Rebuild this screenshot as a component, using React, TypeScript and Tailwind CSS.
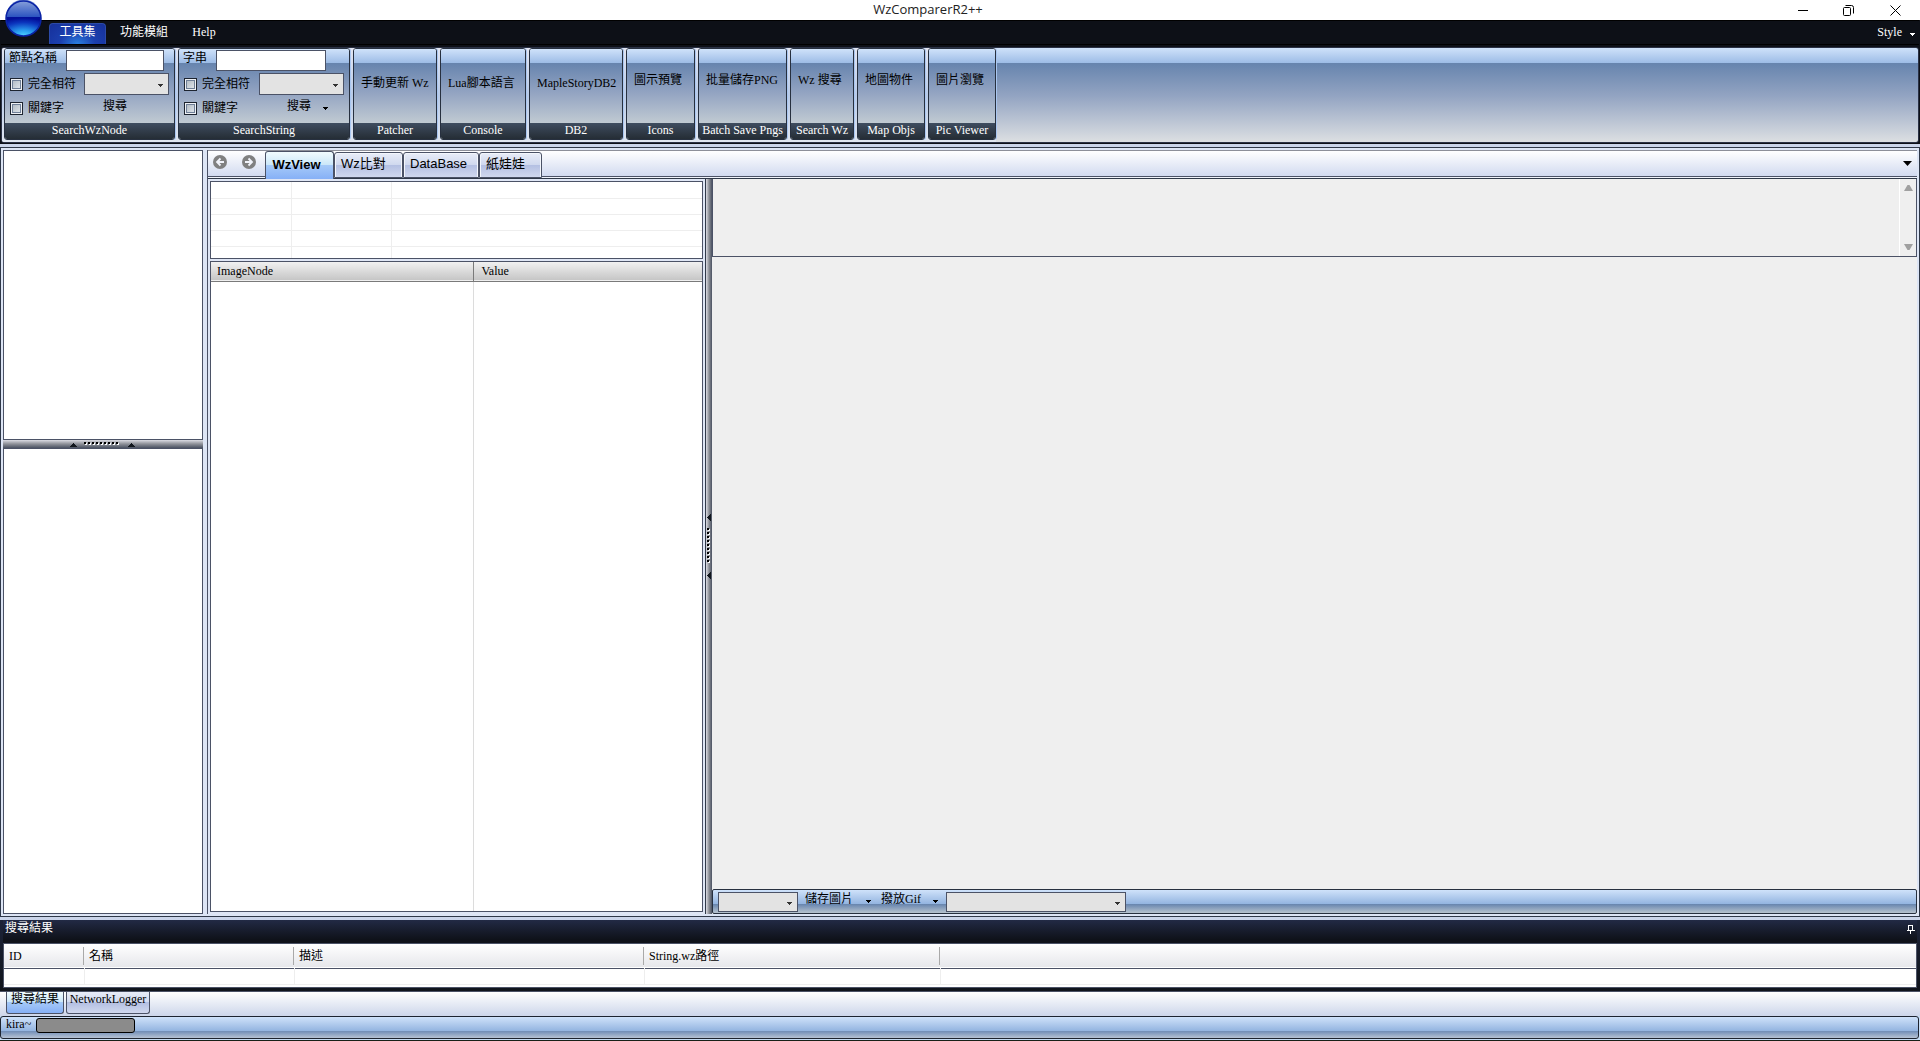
import { ReactNode } from "react";

type ToolButton = {
  text: string;
  caption: string;
  width: string;
  raised?: boolean;
};

const TOOL_BUTTONS: ToolButton[] = [
  { text: "手動更新 Wz", caption: "Patcher", width: "w-[84px]" },
  { text: "Lua腳本語言", caption: "Console", width: "w-[86px]" },
  { text: "MapleStoryDB2", caption: "DB2", width: "w-[94px]" },
  { text: "圖示預覽", caption: "Icons", width: "w-[69px]", raised: true },
  { text: "批量儲存PNG", caption: "Batch Save Pngs", width: "w-[89px]", raised: true },
  { text: "Wz 搜尋", caption: "Search Wz", width: "w-[64px]", raised: true },
  { text: "地圖物件", caption: "Map Objs", width: "w-[68px]", raised: true },
  { text: "圖片瀏覽", caption: "Pic Viewer", width: "w-[68px]", raised: true },
];

const VIEW_TABS = [
  { text: "Wz比對", width: "w-[69px]" },
  { text: "DataBase", width: "w-[76px]" },
  { text: "紙娃娃", width: "w-[63px]" },
];

function Caret({ className = "text-black" }: { className?: string }) {
  return (
    <svg viewBox="0 0 5 3" className={`h-[3px] w-[5px] shrink-0 ${className}`} shapeRendering="crispEdges">
      <path d="M0 0h5v1H4v1H3v1H2V2H1V1H0z" fill="currentColor" />
    </svg>
  );
}

function Combo({ label, className }: { label: string; className: string }) {
  return (
    <div className={`relative shrink-0 ${className}`}>
      <select
        aria-label={label}
        className="block h-full w-full appearance-none border border-[#4b5266] bg-[#e3e3e3] outline-none"
      >
        <option></option>
      </select>
      <Caret className="pointer-events-none absolute top-1/2 right-[6px] text-[#333333]" />
    </div>
  );
}

function CheckItem({ label, id }: { label: string; id: string }) {
  return (
    <div className="flex items-center">
      <input
        id={id}
        type="checkbox"
        className="h-[13px] w-[13px] appearance-none border border-[#1d2430] bg-linear-to-br from-[#a9b3bd] to-[#e9eef2] shadow-[inset_0_0_0_1px_#eef1f5,inset_0_0_0_2px_#6f7f97]"
      />
      <label htmlFor={id} className="pl-[5px]">
        {label}
      </label>
    </div>
  );
}

function RibbonGroup({
  caption,
  className,
  children,
}: {
  caption: string;
  className: string;
  children: ReactNode;
}) {
  return (
    <section
      className={`flex shrink-0 flex-col overflow-hidden rounded-[3px] border border-[#27303f] shadow-[1px_0_0_#a9c6f0] ${className}`}
    >
      <div className="flex h-[74px] flex-col bg-[linear-gradient(#cfe2fa_0,#9dbce6_14px,#6684ae_14px,#93a4c2_44px,#c0cad2_74px)]">
        {children}
      </div>
      <h2 className="h-4 bg-linear-to-b from-[#3f4d60] to-[#252d35] text-center leading-[15px] whitespace-nowrap text-white">
        {caption}
      </h2>
    </section>
  );
}

function SearchGroup({
  id,
  caption,
  label,
  width,
  inputClass,
  searchClass,
  dropDown,
}: {
  id: string;
  caption: string;
  label: string;
  width: string;
  inputClass: string;
  searchClass: string;
  dropDown?: boolean;
}) {
  return (
    <RibbonGroup caption={caption} className={width}>
      <div className="flex h-[23px] items-start pt-px pl-1">
        <label htmlFor={`${id}-text`} className="leading-[17px]">
          {label}
        </label>
        <input
          id={`${id}-text`}
          type="text"
          className={`h-[21px] border border-[#4b5266] bg-white px-1 outline-none ${inputClass}`}
        />
      </div>
      <div className="flex h-[24px] items-center justify-between pr-[5px] pl-[5px]">
        <CheckItem id={`${id}-exact`} label="完全相符" />
        <Combo label={`${label} 類型`} className="h-[22px] w-[85px]" />
      </div>
      <div className="flex h-[24px] items-center pl-[5px]">
        <CheckItem id={`${id}-keyword`} label="關鍵字" />
        <button type="button" className={`pb-1 ${searchClass}`}>
          搜尋
        </button>
        {dropDown && (
          <button type="button" aria-label="搜尋選項" className="pl-[12px]">
            <Caret />
          </button>
        )}
      </div>
    </RibbonGroup>
  );
}

function TitleBar() {
  return (
    <header className="flex h-5 items-center bg-white">
      <h1 className="flex-1 pb-[3px] pl-[76px] text-center font-['Open_Sans',sans-serif] text-[13px] leading-4 text-[#222222]">
        WzComparerR2++
      </h1>
      <button type="button" aria-label="最小化" className="flex w-[46px] justify-center">
        <svg viewBox="0 0 10 10" className="h-[10px] w-[10px]" stroke="#000000">
          <path d="M0 5.5h10" />
        </svg>
      </button>
      <button type="button" aria-label="還原" className="flex w-[45px] justify-center">
        <svg viewBox="0 0 11 11" className="h-[11px] w-[11px]" fill="none" stroke="#000000">
          <rect x="0.5" y="2.5" width="7" height="8" rx="1" />
          <path d="M2.5 .5h6a2 2 0 0 1 2 2v6" />
        </svg>
      </button>
      <button type="button" aria-label="關閉" className="flex w-[49px] justify-center">
        <svg viewBox="0 0 11 11" className="h-[11px] w-[11px]" stroke="#000000">
          <path d="M.5.5l10 10M10.500.5l-10 10" />
        </svg>
      </button>
    </header>
  );
}

function AppOrb() {
  return (
    <button type="button" aria-label="選單" className="absolute top-0 left-[5px] h-[37px] w-[37px]">
      <svg viewBox="0 0 37 37" className="h-[37px] w-[37px]">
        <defs>
          <linearGradient id="orb-top" x1="0" y1="0" x2="0" y2="1">
            <stop offset="0" stopColor="#8fa6dc" />
            <stop offset="1" stopColor="#2b53c0" />
          </linearGradient>
          <radialGradient id="orb-bottom" cx="0.5" cy="1" r="0.95">
            <stop offset="0" stopColor="#4fd4ff" />
            <stop offset="0.3" stopColor="#2aa0f0" />
            <stop offset="0.75" stopColor="#0b35bd" />
            <stop offset="1" stopColor="#03109a" />
          </radialGradient>
        </defs>
        <path d="M1 17a17.500 17.500 0 0 1 35 0z" fill="url(#orb-top)" />
        <path d="M1 17h35a17.500 19 0 0 1-35 0z" fill="url(#orb-bottom)" />
        <circle cx="18.500" cy="18.500" r="17.500" fill="none" stroke="#0b24a6" strokeWidth="1.500" />
      </svg>
    </button>
  );
}

function Ribbon() {
  return (
    <div className="bg-[#0d1017] px-px pb-px">
      <nav className="flex h-[25px] items-end border-b border-black border-t pl-[48px] text-white">
        <button
          type="button"
          className="h-[21px] w-[57px] rounded-t-[4px] border border-b-0 border-[#2c4aa8] bg-[radial-gradient(ellipse_at_bottom,#2a7fe0_0,#1b3fae_45%,#16309a_100%)] pb-1 leading-[14px]"
        >
          工具集
        </button>
        <button type="button" className="h-[21px] w-[73px] pb-1 pl-[3px] leading-[14px]">
          功能模組
        </button>
        <button type="button" className="h-[21px] w-[50px] pb-1 leading-[14px]">
          Help
        </button>
        <button type="button" className="ml-auto flex h-[21px] items-center gap-2 pr-1 pb-[3px] leading-[14px]">
          Style <Caret className="mt-1 text-white" />
        </button>
      </nav>
      <div className="mt-[2px] overflow-hidden rounded-[3px] border border-[#2a3145] bg-[linear-gradient(#cfe2fa_0,#9dbce6_15px,#6684ae_15px,#93a4c2_48px,#dcdfe2_94px)]">
        <div className="flex w-fit gap-[3px] bg-linear-to-b from-[#e3e6f2] via-[#b9cbe8] to-[#e0e6f0] pb-[2px] pl-[2px]">
          <SearchGroup
            id="node"
            caption="SearchWzNode"
            label="節點名稱"
            width="w-[171px]"
            inputClass="ml-[9px] w-[98px]"
            searchClass="pl-[39px]"
          />
          <SearchGroup
            id="string"
            caption="SearchString"
            label="字串"
            width="w-[172px]"
            inputClass="ml-[9px] w-[110px]"
            searchClass="pl-[49px]"
            dropDown
          />
          {TOOL_BUTTONS.map((tool) => (
            <RibbonGroup key={tool.caption} caption={tool.caption} className={tool.width}>
              <button
                type="button"
                className={`flex-1 pl-[7px] text-left whitespace-nowrap ${tool.raised ? "pb-3" : "pb-[6px]"}`}
              >
                {tool.text}
              </button>
            </RibbonGroup>
          ))}
        </div>
      </div>
    </div>
  );
}

function Grip() {
  return (
    <svg viewBox="0 0 66 7" className="h-[7px] w-[66px]" shapeRendering="crispEdges">
      <path d="M0 6h7L4 2H3zM58 6h7L62 2H61z" fill="#11161d" />
      {Array.from({ length: 9 }, (_, i) => (
        <g key={i}>
          <rect x={15 + i * 4} y="2" width="2" height="2" fill="#ffffff" />
          <rect x={14 + i * 4} y="1" width="2" height="2" fill="#000000" />
        </g>
      ))}
    </svg>
  );
}

function GripVertical() {
  return (
    <svg viewBox="0 0 6 66" className="h-[66px] w-[6px]" shapeRendering="crispEdges">
      <path d="M5 0v7L1 4V3zM5 58v7L1 62V61z" fill="#11161d" />
      {Array.from({ length: 9 }, (_, i) => (
        <g key={i}>
          <rect x="2" y={15 + i * 4} width="2" height="2" fill="#ffffff" />
          <rect x="1" y={14 + i * 4} width="2" height="2" fill="#000000" />
        </g>
      ))}
    </svg>
  );
}

function TreePanels() {
  return (
    <aside className="flex w-[200px] shrink-0 flex-col">
      <div className="h-[290px] border border-[#4b5266] bg-white" />
      <div className="flex h-2 items-center justify-center bg-linear-to-b from-[#dcdce4] via-[#8d9097] to-[#4b5262]">
        <Grip />
      </div>
      <div className="flex-1 border border-[#4b5266] bg-white" />
    </aside>
  );
}

function NavArrow({ back }: { back?: boolean }) {
  return (
    <svg viewBox="0 0 14 14" className="h-[14px] w-[14px]" fill="none">
      <circle cx="7" cy="7" r="7" fill="#808080" />
      <path
        d={back ? "M11 7H4M7.500 3.500L4 7l3.500 3.500" : "M3 7h7M6.500 3.500L10 7l-3.500 3.500"}
        stroke="#f1f3fa"
        strokeWidth="1.800"
      />
    </svg>
  );
}

function ViewTabs() {
  return (
    <div className="flex h-[29px] items-start border-t border-[#8d8f99] bg-linear-to-b from-white to-[#cdd6ee] shadow-[inset_0_-1px_0_#2f3848,inset_0_-2px_0_#f0f3fb,inset_0_-3px_0_#4b5266]">
      <div className="flex w-[57px] gap-[15px] pt-1 pl-[5px]">
        <button type="button" aria-label="上一頁">
          <NavArrow back />
        </button>
        <button type="button" aria-label="下一頁">
          <NavArrow />
        </button>
      </div>
      <button
        type="button"
        className="h-7 w-[69px] rounded-t-[3px] border border-b-0 border-[#4b5266] bg-[linear-gradient(#f2fcff_0,#c9e6f8_50%,#a5c9f8_50%,#86b0f6_100%)] pr-[6px] pb-[2px] text-center font-['Liberation_Sans','Noto_Sans_CJK_TC',sans-serif] text-[13px] font-bold"
      >
        WzView
      </button>
      {VIEW_TABS.map((tab) => (
        <button
          key={tab.text}
          type="button"
          className={`mt-px h-[26px] rounded-t-[3px] border border-[#4b5266] bg-[linear-gradient(#e9edf8_0,#cfd8ee_50%,#b3bfe2_50%,#d0d8ee_100%)] pb-[2px] pl-[6px] text-left font-['Liberation_Sans','Noto_Sans_CJK_TC',sans-serif] text-[13px] shadow-[inset_1px_1px_0_#f3f6fc,inset_-1px_0_0_#f3f6fc] ${tab.width}`}
        >
          {tab.text}
        </button>
      ))}
      <button type="button" aria-label="分頁清單" className="mt-[10px] mr-[5px] ml-auto">
        <svg viewBox="0 0 9 5" className="h-[5px] w-[9px]">
          <path d="M0 0h9L4.500 5z" fill="#000000" />
        </svg>
      </button>
    </div>
  );
}

function NodePanel() {
  return (
    <div className="flex w-[498px] shrink-0 flex-col gap-[2px] border-r border-[#2f3848] bg-[#dfe6f5] p-[2px]">
      <div className="h-[78px] overflow-hidden border border-[#4b5266] bg-white">
        <table className="w-full table-fixed border-collapse">
          <colgroup>
            <col className="w-[80px]" />
            <col className="w-[100px]" />
            <col />
          </colgroup>
          <tbody>
            {[0, 1, 2, 3, 4].map((row) => (
              <tr key={row} className="h-4 border-b border-[#eeeeee]">
                <td className="border-r border-[#eeeeee]" />
                <td className="border-r border-[#eeeeee]" />
                <td />
              </tr>
            ))}
          </tbody>
        </table>
      </div>
      <div className="flex flex-1 flex-col border border-[#4b5266] bg-white">
        <table className="w-full table-fixed border-collapse">
          <colgroup>
            <col className="w-[262px]" />
            <col />
          </colgroup>
          <thead>
            <tr className="h-[19px] border-b border-[#7a7a7a] bg-linear-to-b from-[#f1f1f1] to-[#c6c6c6] text-left">
              <th className="border-r border-[#7a7a7a] pl-[6px] leading-[16px] font-normal">ImageNode</th>
              <th className="pl-2 leading-[16px] font-normal">Value</th>
            </tr>
          </thead>
        </table>
        <div className="flex flex-1">
          <div className="w-[263px] border-r border-[#dcdcdc]" />
        </div>
      </div>
    </div>
  );
}

function PictureToolbar() {
  return (
    <div className="flex h-[25px] items-center rounded-[2px] border border-[#27303f] bg-[linear-gradient(#cfe2fa_0,#93b4e0_14px,#6684ae_14px,#c0cad2_24px)] pl-[5px] whitespace-nowrap">
      <Combo label="動畫" className="h-5 w-20" />
      <button type="button" className="pb-[6px] pl-[7px]">
        儲存圖片
      </button>
      <button type="button" aria-label="儲存選項" className="pr-[10px] pl-[13px]">
        <Caret />
      </button>
      <button type="button" className="pb-[6px]">
        撥放Gif
      </button>
      <button type="button" aria-label="播放選項" className="pr-2 pl-3">
        <Caret />
      </button>
      <Combo label="骨架" className="h-5 w-[180px]" />
    </div>
  );
}

function ViewPanel() {
  return (
    <div className="flex min-w-0 flex-1 flex-col bg-[#efefef]">
      <div className="flex h-[78px] border border-t-0 border-[#4b5266]">
        <textarea
          aria-label="節點內容"
          readOnly
          className="min-w-0 flex-1 resize-none bg-[#efefef] outline-none"
        />
        <div className="flex w-[17px] flex-col items-center justify-between border-l border-white py-[6px] text-[#a0a0a0]">
          <svg viewBox="0 0 9 6" className="h-[6px] w-[9px]">
            <path d="M0 6L3.500 0h2L9 6z" fill="currentColor" />
          </svg>
          <svg viewBox="0 0 9 6" className="h-[6px] w-[9px]">
            <path d="M0 0l3.500 6h2L9 0z" fill="currentColor" />
          </svg>
        </div>
      </div>
      <div className="flex-1" />
      <PictureToolbar />
    </div>
  );
}

function ResultDock() {
  return (
    <section className="bg-linear-to-b from-[#1c2338] to-[#10141c] px-[3px] pb-[3px]">
      <div className="flex h-[23px] items-start justify-between bg-linear-to-b from-[#222a45] to-[#0f121a] to-85% px-[2px] text-white">
        <h2 className="leading-[16px]">搜尋結果</h2>
        <button type="button" aria-label="自動隱藏" className="pt-[5px]">
          <svg viewBox="0 0 8 9" className="h-[9px] w-2" fill="none" stroke="#ffffff" shapeRendering="crispEdges">
            <path d="M1.500 5V.5h4V5M5.500 0v5M0 5.500h8M3.500 6v3" />
            <path d="M5 0v5" />
          </svg>
        </button>
      </div>
      <div className="h-[45px] overflow-hidden border border-[#4b5266] bg-white">
        <table className="w-full table-fixed border-collapse">
          <colgroup>
            <col className="w-[80px]" />
            <col className="w-[210px]" />
            <col className="w-[350px]" />
            <col className="w-[296px]" />
            <col />
          </colgroup>
          <thead>
            <tr className="h-6 border-b border-[#4b5266] bg-linear-to-b from-white to-[#e6e7eb] text-left">
              {["ID", "名稱", "描述", "String.wz路徑", ""].map((name, i) => (
                <th key={i} className="p-0 font-normal">
                  <div className={`h-[18px] leading-[19px] ${i < 4 ? "border-r border-[#a9a9a9] pl-[5px]" : ""}`}>
                    {name}
                  </div>
                </th>
              ))}
            </tr>
          </thead>
          <tbody>
            <tr className="h-4 border-b border-[#eeeeee]">
              <td className="border-r border-[#eeeeee]" />
              <td className="border-r border-[#eeeeee]" />
              <td className="border-r border-[#eeeeee]" />
              <td className="border-r border-[#eeeeee]" />
              <td />
            </tr>
          </tbody>
        </table>
      </div>
    </section>
  );
}

function DockTabs() {
  return (
    <div className="flex h-[25px] items-start gap-[2px] border-t border-[#4b5266] bg-linear-to-b from-white to-[#cdd6ea] pl-[6px]">
      <button
        type="button"
        className="h-[22px] w-[58px] rounded-b-[3px] border border-t-0 border-[#4b5266] bg-[linear-gradient(#f2fcff_0,#c9e6f8_50%,#a5c9f8_50%,#86b0f6_100%)] pb-[6px] leading-[15px]"
      >
        搜尋結果
      </button>
      <button
        type="button"
        className="h-[22px] w-[84px] rounded-b-[3px] border border-t-0 border-[#4b5266] bg-[linear-gradient(#e9edf8_0,#cfd8ee_50%,#b3bfe2_50%,#d0d8ee_100%)] pb-[6px] leading-[15px]"
      >
        NetworkLogger
      </button>
    </div>
  );
}

function StatusBar() {
  return (
    <footer className="border-b border-[#182018] bg-[#c6dcf4] pr-px pb-px">
      <div className="flex h-[23px] items-start gap-[6px] rounded-[3px] border border-[#1d2430] bg-[linear-gradient(#cfe2fa_0,#93b4e0_14px,#6f8cb6_14px,#c0cad8_22px)] pl-[5px]">
        <span className="w-[24px] leading-[15px]">kira~</span>
        <div
          role="progressbar"
          aria-label="進度"
          className="mt-px h-[15px] w-[99px] rounded-[3px] border border-black bg-[#8b8b8b]"
        />
      </div>
    </footer>
  );
}

export default function App() {
  return (
    <div className="relative flex min-h-screen flex-col bg-[#cbd5ea] font-['Liberation_Serif','Noto_Sans_CJK_TC',serif] text-[12px] text-black">
      <TitleBar />
      <Ribbon />
      <AppOrb />
      <main className="my-[3px] flex flex-1 gap-1 border border-[#2f3848] bg-[#dde5f5] p-[2px]">
        <TreePanels />
        <div className="flex min-w-0 flex-1 flex-col border-l border-[#4b5266]">
          <ViewTabs />
          <div className="flex flex-1">
            <NodePanel />
            <div className="flex w-[6px] shrink-0 items-center bg-linear-to-r from-[#dcdce4] via-[#8d9097] to-[#4b5262]">
              <GripVertical />
            </div>
            <ViewPanel />
          </div>
        </div>
      </main>
      <ResultDock />
      <DockTabs />
      <StatusBar />
    </div>
  );
}
